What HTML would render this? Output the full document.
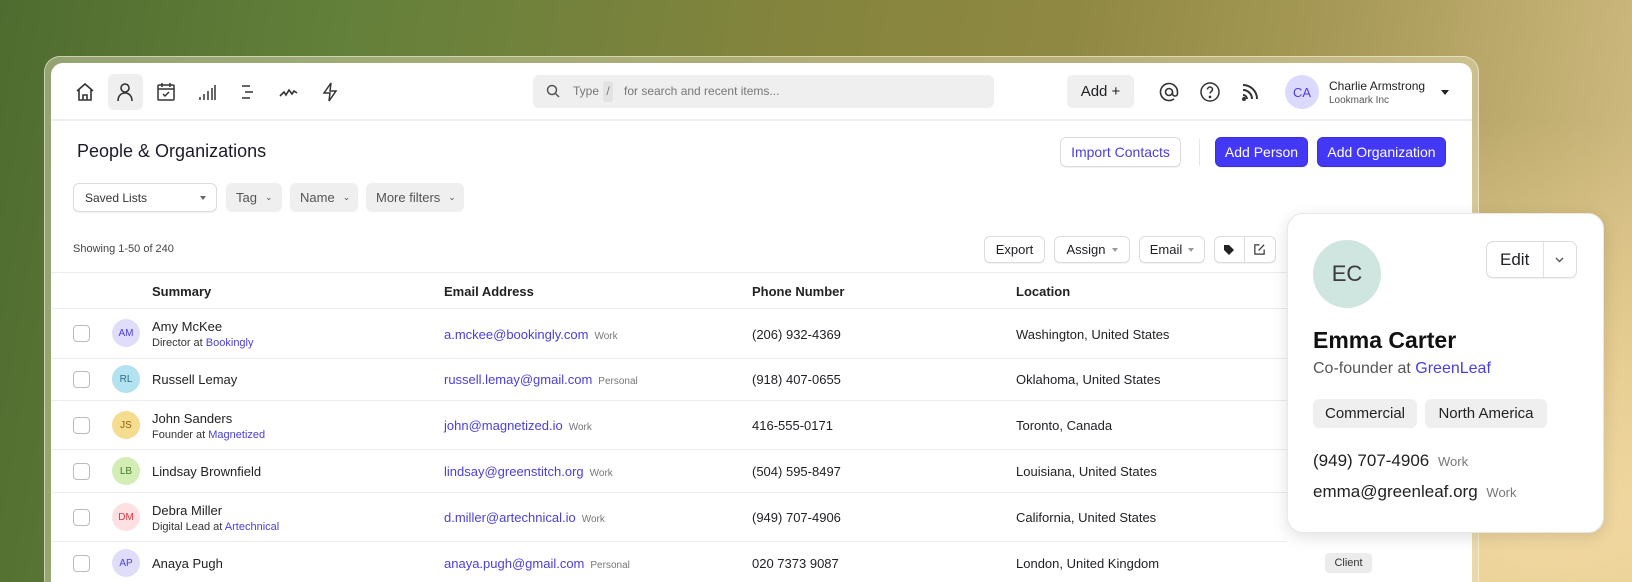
<!DOCTYPE html>
<html style="overflow:hidden;width:1632px;height:582px"><head><meta charset="utf-8"><style>
*{box-sizing:border-box;margin:0;padding:0}
body{width:1632px;height:582px;overflow:hidden;position:relative;font-family:"Liberation Sans",sans-serif;color:#1f1f24;
background:radial-gradient(ellipse 700px 400px at 1550px 520px,#f2d9a2 0%,rgba(236,210,150,0.8) 40%,rgba(200,180,110,0) 100%),
linear-gradient(100deg,#4f6c30 0%,#63803a 20%,#83843d 45%,#8f8842 62%,#a89a58 78%,#d6bf86 100%);}
.a{position:absolute}
.frame{left:44px;top:56px;width:1435px;height:540px;border-radius:16px;background:rgba(230,225,190,0.45);border:1px solid rgba(255,255,240,0.5)}
.panel{left:51px;top:63px;width:1421px;height:519px;border-radius:12px 12px 0 0;background:#fff}
.ico{position:absolute;top:80px;width:24px;height:24px}
.btn{position:absolute;border:1px solid #dcdce0;border-radius:6px;background:#fff;font-size:14px;display:flex;align-items:center;justify-content:center;box-shadow:0 1px 1px rgba(0,0,0,.06)}
.gray{position:absolute;background:#efefef;border-radius:6px;font-size:13px;color:#555;display:flex;align-items:center;padding-left:10px}
.blue{background:#4338f5;color:#fff;border-color:#3a30e0}
.hline{position:absolute;left:51px;width:1236px;height:1px;background:#ececee}
.th{position:absolute;top:284px;font-size:13px;font-weight:bold;color:#222}
.cb{position:absolute;left:73px;width:17px;height:17px;border:1.5px solid #bbb;border-radius:4px}
.av{position:absolute;left:112px;width:28px;height:28px;border-radius:50%;font-size:10px;display:flex;align-items:center;justify-content:center}
.nm{position:absolute;left:152px;font-size:13px;color:#222}
.sub{position:absolute;left:152px;font-size:11px;color:#333}
.lk{color:#4a3fd8}
.em{position:absolute;left:444px;font-size:13px;color:#4a3fd8}
.em small{font-size:10px;color:#777;margin-left:6px}
.ph{position:absolute;left:752px;font-size:13px}
.lo{position:absolute;left:1016px;font-size:13px}
</style></head><body>
<div class="a frame"></div>
<div class="a panel"></div>
<svg class="ico" style="left:73px" viewBox="0 0 24 24" fill="none" stroke="#333" stroke-width="1.6"><path d="M4 11l8-7 8 7M6 9.5V20h12V9.5M10 20v-5h4v5"/></svg>
<div class="a" style="left:108px;top:74px;width:35px;height:36px;background:#efefef;border-radius:6px"></div>
<svg class="ico" style="left:113px" viewBox="0 0 24 24" fill="none" stroke="#333" stroke-width="1.6"><circle cx="12" cy="8" r="4"/><path d="M5 21c0-5 3-8 7-8s7 3 7 8"/></svg>
<svg class="ico" style="left:154px" viewBox="0 0 24 24" fill="none" stroke="#333" stroke-width="1.5"><rect x="4" y="5" width="16" height="15" rx="1"/><path d="M4 9h16M8 3v4M16 3v4M9 14l2 2 4-4"/></svg>
<svg class="ico" style="left:195px" viewBox="0 0 24 24" fill="none" stroke="#333" stroke-width="1.5"><path d="M5 20v-3M9 20v-6M13 20v-9M17 20v-12M20 20V5"/></svg>
<svg class="ico" style="left:236px" viewBox="0 0 24 24" fill="none" stroke="#333" stroke-width="1.6"><path d="M6 6h8M9 12h8M6 18h8"/></svg>
<svg class="ico" style="left:277px" viewBox="0 0 24 24" fill="none" stroke="#333" stroke-width="1.6"><path d="M3 16l4-4 2 3 3-5 3 4 2-3 3 2"/></svg>
<svg class="ico" style="left:318px" viewBox="0 0 24 24" fill="none" stroke="#333" stroke-width="1.5"><path d="M13 3L6 13h6l-1 8 7-10h-6z"/></svg>
<div class="a" style="left:533px;top:75px;width:461px;height:33px;background:#efefef;border-radius:6px"></div>
<svg class="a" style="left:545px;top:83px" width="16" height="16" viewBox="0 0 16 16" fill="none" stroke="#555" stroke-width="1.5"><circle cx="7" cy="7" r="4.5"/><path d="M10.5 10.5L14 14"/></svg>
<div class="a" style="left:573px;top:84px;font-size:12px;color:#777">Type</div>
<div class="a" style="left:603px;top:81px;width:10px;height:21px;background:#e3e3e3;border-radius:3px;font-size:12px;color:#777;text-align:center;line-height:21px">/</div>
<div class="a" style="left:624px;top:84px;font-size:12px;color:#777">for search and recent items...</div>
<div class="a" style="left:1067px;top:75px;width:67px;height:33px;background:#efefef;border-radius:6px;font-size:15px;display:flex;align-items:center;justify-content:center">Add +</div>
<svg class="ico" style="left:1157px" viewBox="0 0 24 24" fill="none" stroke="#333" stroke-width="1.6"><circle cx="12" cy="12" r="3.5"/><path d="M15.5 12v1.5a2.5 2.5 0 005 0V12a8.5 8.5 0 10-3.5 6.9"/></svg>
<svg class="ico" style="left:1198px" viewBox="0 0 24 24" fill="none" stroke="#333" stroke-width="1.5"><circle cx="12" cy="12" r="9"/><path d="M9.5 9.5a2.5 2.5 0 115 0c0 2-2.5 2-2.5 4"/><circle cx="12" cy="17" r=".6" fill="#333"/></svg>
<svg class="ico" style="left:1238px" viewBox="0 0 24 24" fill="none" stroke="#333" stroke-width="2"><path d="M5 5a14 14 0 0114 14M5 10a9 9 0 019 9M5 15a4 4 0 014 4"/><circle cx="6" cy="19" r="1" fill="#333"/></svg>
<div class="a" style="left:1285px;top:75px;width:34px;height:34px;border-radius:50%;background:#dcdafc;color:#4a3fd8;font-size:13px;display:flex;align-items:center;justify-content:center">CA</div>
<div class="a" style="left:1329px;top:79px;font-size:12px;color:#222">Charlie Armstrong</div>
<div class="a" style="left:1329px;top:95px;font-size:10px;color:#555">Lookmark Inc</div>
<div class="a" style="left:1441px;top:90px;border:4px solid transparent;border-top:5px solid #222"></div>
<div class="a" style="left:51px;top:119px;width:1421px;height:2px;background:#efefef"></div>
<div class="a" style="left:77px;top:141px;font-size:18px;color:#1c1c28">People &amp; Organizations</div>
<div class="btn" style="left:1060px;top:137px;width:121px;height:30px;color:#4a3fd8">Import Contacts</div>
<div class="a" style="left:1199px;top:139px;width:1px;height:27px;background:#e6e6e6"></div>
<div class="btn blue" style="left:1215px;top:137px;width:93px;height:30px">Add Person</div>
<div class="btn blue" style="left:1317px;top:137px;width:129px;height:30px">Add Organization</div>
<div class="btn" style="left:73px;top:183px;width:144px;height:29px;justify-content:flex-start;padding-left:11px;font-size:12px;color:#333">Saved Lists<span style="position:absolute;right:10px;top:12px;border:3.5px solid transparent;border-top:4px solid #666"></span></div>
<div class="gray" style="left:226px;top:183px;width:56px;height:29px">Tag <span style="margin-left:8px;font-size:9px">⌄</span></div>
<div class="gray" style="left:290px;top:183px;width:68px;height:29px">Name <span style="margin-left:8px;font-size:9px">⌄</span></div>
<div class="gray" style="left:366px;top:183px;width:98px;height:29px">More filters <span style="margin-left:8px;font-size:9px">⌄</span></div>
<div class="a" style="left:73px;top:243px;font-size:11px;color:#444">Showing 1-50 of 240</div>
<div class="btn" style="left:984px;top:236px;width:61px;height:27px;font-size:13px">Export</div>
<div class="btn" style="left:1054px;top:236px;width:76px;height:27px;font-size:13px">Assign <span style="margin-left:6px;border:3px solid transparent;border-top:4px solid #999;margin-top:4px"></span></div>
<div class="btn" style="left:1139px;top:236px;width:66px;height:27px;font-size:13px">Email <span style="margin-left:6px;border:3px solid transparent;border-top:4px solid #999;margin-top:4px"></span></div>
<div class="btn" style="left:1214px;top:236px;width:62px;height:27px"></div>
<div class="a" style="left:1244px;top:237px;width:1px;height:25px;background:#ddd"></div>
<svg class="a" style="left:1222px;top:243px" width="14" height="14" viewBox="0 0 14 14"><path d="M2 2h5l5 5-5 5-5-5z" fill="#222"/></svg>
<svg class="a" style="left:1253px;top:243px" width="13" height="13" viewBox="0 0 14 14" fill="none" stroke="#333" stroke-width="1.3"><path d="M7 2H2v10h10V7M6 8l6-6"/></svg>
<div class="hline" style="top:272px"></div>
<div class="th" style="left:152px">Summary</div>
<div class="th" style="left:444px">Email Address</div>
<div class="th" style="left:752px">Phone Number</div>
<div class="th" style="left:1016px">Location</div>
<div class="hline" style="top:308px"></div>
<div class="hline" style="top:358px"></div>
<div class="hline" style="top:400px"></div>
<div class="hline" style="top:449px"></div>
<div class="hline" style="top:492px"></div>
<div class="hline" style="top:541px"></div>

<div class="cb" style="top:325px"></div><div class="av" style="top:319px;background:#e0ddfb;color:#4a3fd8">AM</div>
<div class="nm" style="top:319px">Amy McKee</div><div class="sub" style="top:337px">Director at <span class="lk">Bookingly</span></div>
<div class="em" style="top:327px">a.mckee@bookingly.com<small>Work</small></div><div class="ph" style="top:327px">(206) 932-4369</div><div class="lo" style="top:327px">Washington, United States</div>

<div class="cb" style="top:371px"></div><div class="av" style="top:365px;background:#b3e2f0;color:#2d6f87">RL</div>
<div class="nm" style="top:372px">Russell Lemay</div>
<div class="em" style="top:372px">russell.lemay@gmail.com<small>Personal</small></div><div class="ph" style="top:372px">(918) 407-0655</div><div class="lo" style="top:372px">Oklahoma, United States</div>

<div class="cb" style="top:417px"></div><div class="av" style="top:411px;background:#f6dc8e;color:#8a6410">JS</div>
<div class="nm" style="top:411px">John Sanders</div><div class="sub" style="top:429px">Founder at <span class="lk">Magnetized</span></div>
<div class="em" style="top:418px">john@magnetized.io<small>Work</small></div><div class="ph" style="top:418px">416-555-0171</div><div class="lo" style="top:418px">Toronto, Canada</div>

<div class="cb" style="top:463px"></div><div class="av" style="top:457px;background:#d3eeb5;color:#4b7a2a">LB</div>
<div class="nm" style="top:464px">Lindsay Brownfield</div>
<div class="em" style="top:464px">lindsay@greenstitch.org<small>Work</small></div><div class="ph" style="top:464px">(504) 595-8497</div><div class="lo" style="top:464px">Louisiana, United States</div>

<div class="cb" style="top:509px"></div><div class="av" style="top:503px;background:#fde0e2;color:#d43a44">DM</div>
<div class="nm" style="top:503px">Debra Miller</div><div class="sub" style="top:521px">Digital Lead at <span class="lk">Artechnical</span></div>
<div class="em" style="top:510px">d.miller@artechnical.io<small>Work</small></div><div class="ph" style="top:510px">(949) 707-4906</div><div class="lo" style="top:510px">California, United States</div>

<div class="cb" style="top:555px"></div><div class="av" style="top:549px;background:#e0ddfb;color:#4a3fd8">AP</div>
<div class="nm" style="top:556px">Anaya Pugh</div>
<div class="em" style="top:556px">anaya.pugh@gmail.com<small>Personal</small></div><div class="ph" style="top:556px">020 7373 9087</div><div class="lo" style="top:556px">London, United Kingdom</div>
<div class="a" style="left:1325px;top:553px;width:47px;height:20px;background:#ececec;border-radius:4px;font-size:11px;color:#333;text-align:center;line-height:20px">Client</div>

<div class="a" style="left:1287px;top:213px;width:317px;height:320px;background:#fff;border-radius:16px;border:1px solid #e8e8e8;box-shadow:0 4px 16px rgba(0,0,0,.12)"></div>
<div class="a" style="left:1313px;top:240px;width:68px;height:68px;border-radius:50%;background:#cfe5e0;color:#3b3b3b;font-size:22px;display:flex;align-items:center;justify-content:center">EC</div>
<div class="btn" style="left:1486px;top:241px;width:91px;height:37px;font-size:17px;justify-content:flex-start;padding-left:13px;border-radius:7px">Edit</div>
<div class="a" style="left:1543px;top:242px;width:1px;height:35px;background:#e2e2e2"></div>
<svg class="a" style="left:1553px;top:253px" width="13" height="13" viewBox="0 0 13 13" fill="none" stroke="#555" stroke-width="1.4"><path d="M3 5l3.5 3.5L10 5"/></svg>
<div class="a" style="left:1313px;top:327px;font-size:23px;font-weight:bold;color:#111">Emma Carter</div>
<div class="a" style="left:1313px;top:360px;font-size:16px;color:#555">Co-founder at <span class="lk">GreenLeaf</span></div>
<div class="a" style="left:1313px;top:399px;width:104px;height:29px;background:#efefef;border-radius:6px;font-size:15px;color:#222;text-align:center;line-height:29px">Commercial</div>
<div class="a" style="left:1425px;top:399px;width:122px;height:29px;background:#efefef;border-radius:6px;font-size:15px;color:#222;text-align:center;line-height:29px">North America</div>
<div class="a" style="left:1313px;top:451px;font-size:17px;color:#222">(949) 707-4906 <span style="font-size:13px;color:#777;margin-left:4px">Work</span></div>
<div class="a" style="left:1313px;top:482px;font-size:17px;color:#222">emma@greenleaf.org <span style="font-size:13px;color:#777;margin-left:4px">Work</span></div>
</body></html>
